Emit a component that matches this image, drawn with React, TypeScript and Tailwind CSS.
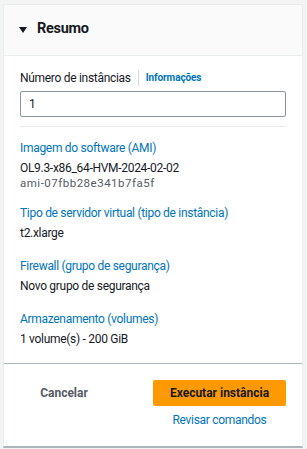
export default function App() {
  const items = [
    { label: 'Imagem do software (AMI)', value: 'OL9.3-x86_64-HVM-2024-02-02', sub: 'ami-07fbb28e341b7fa5f' },
    { label: 'Tipo de servidor virtual (tipo de instância)', value: 't2.xlarge' },
    { label: 'Firewall (grupo de segurança)', value: 'Novo grupo de segurança' },
    { label: 'Armazenamento (volumes)', value: '1 volume(s) - 200 GiB' },
  ];

  return (
    <div className="h-[449px] bg-[#f2f3f3] pt-1 pl-[3px] pr-[4px]" style={{ fontFamily: 'Roboto, "Liberation Sans", sans-serif' }}>
      <div className="bg-white border border-[#eaeded] border-b-2 border-b-[#aab7b8]">
        <div className="h-[51px] bg-[#fafafa] border-b border-[#eaeded] flex items-center gap-[10px] pl-[15px] pb-[2px]">
          <svg width="8" height="6" viewBox="0 0 8 6" className="mt-[1px]"><path d="M0 0h8L4 6z" fill="#16191f" /></svg>
          <span className="text-[14.5px] tracking-[-0.3px] font-bold text-[#16191f] leading-none">Resumo</span>
        </div>
        <div className="px-4 pt-3 pb-[14px] text-[12px] tracking-[-0.3px]">
          <div className="flex items-center text-[#16191f] leading-5">
            <span>Número de instâncias</span>
            <span className="ml-[7px] mr-[7px] w-px h-4 bg-[#d5dbdb]" />
            <span className="text-[10px] tracking-[-0.1px] font-bold text-[#0073bb]">Informações</span>
          </div>
          <div className="mt-[3px] h-[26px] border border-[#879596] rounded-[2px] px-2 flex items-center text-[#16191f]">1</div>
          <div className="mt-[9px] border-t border-[#eaeded]" />
          <div className="mt-[11px] flex flex-col gap-[13px]">
            {items.map(it => (
              <div key={it.label} className="flex flex-col">
                <span className="leading-5 text-[#0073bb]">{it.label}</span>
                <span className="leading-5 text-[#16191f]">{it.value}</span>
                {it.sub && <span className="-mt-[2px] text-[11.5px] tracking-[0.5px] leading-[14px] text-[#545b64]">{it.sub}</span>}
              </div>
            ))}
          </div>
        </div>
        <div className="border-t border-[#aab7b8] pt-4 pb-[18px] pl-[33px] pr-4 flex items-start justify-between text-[12px]">
          <button className="w-[54px] h-[26px] font-bold text-[#545b64]">Cancelar</button>
          <div className="flex flex-col items-center w-[133px]">
            <button className="w-full h-[26px] bg-[#ff9900] rounded-[2px] font-bold text-[#16191f]">Executar instância</button>
            <span className="mt-[6px] tracking-[-0.3px] text-[#0073bb] leading-4">Revisar comandos</span>
          </div>
        </div>
      </div>
    </div>
  );
}
